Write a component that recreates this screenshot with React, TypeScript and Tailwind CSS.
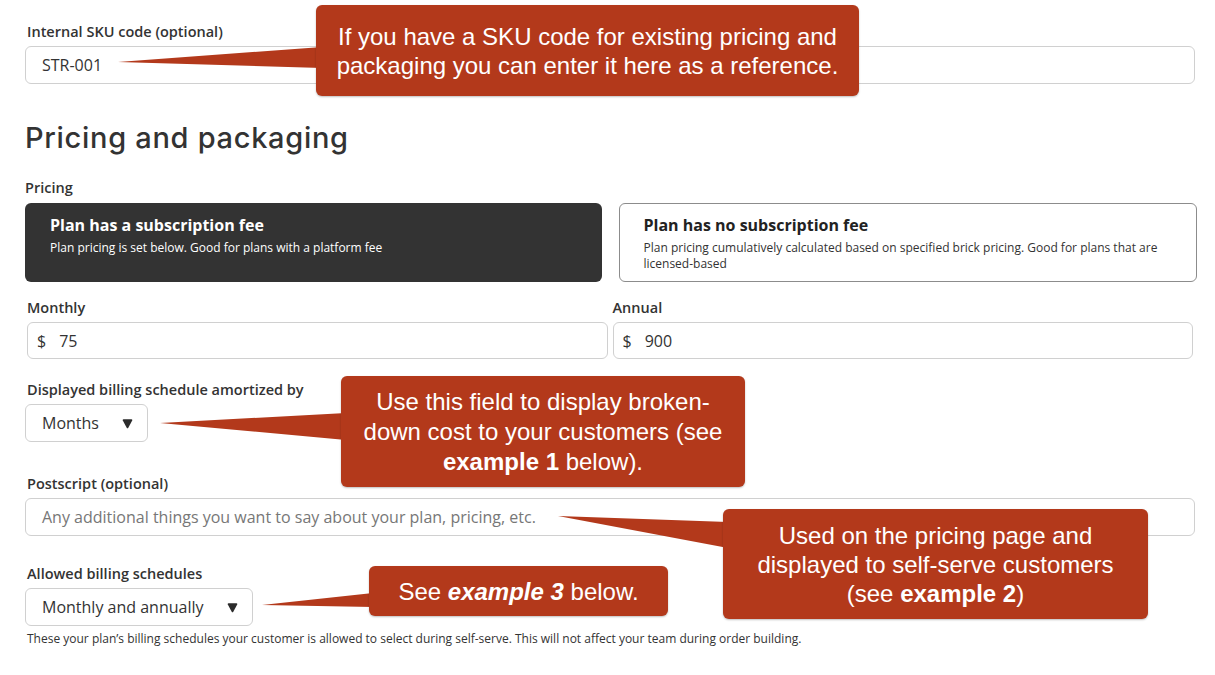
import React from 'react'

function Caret() {
  return (
    <svg width="11" height="11" viewBox="0 0 11 11" aria-hidden="true">
      <path d="M1.6 1.2 H9.4 Q10.6 1.2 10.2 2.4 L6.3 9.7 Q5.5 10.9 4.7 9.7 L0.8 2.4 Q0.4 1.2 1.6 1.2 Z" fill="#2b2b2b" />
    </svg>
  )
}

function Label({ children, className = '' }: { children: React.ReactNode; className?: string }) {
  return <p className={`text-[14.5px] font-semibold leading-[18px] text-[#333] ${className}`}>{children}</p>
}

function Callout({ className, children }: { className: string; children: React.ReactNode }) {
  return (
    <div
      className={`absolute flex items-center justify-center rounded-[6px] bg-[#b3391b] text-center font-['Liberation_Sans',Arial,sans-serif] text-[24px] text-white shadow-[0_1px_2px_rgba(0,0,0,0.25)] ${className}`}
    >
      <div>{children}</div>
    </div>
  )
}

export default function App() {
  return (
    <main className="relative h-[675px] w-[1215px] overflow-hidden bg-white font-['Open_Sans',sans-serif] text-[#333]">
      <div className="pl-[25px] pr-[20px] pt-[23px]">
        <Label className="pl-[2px]">Internal SKU code (optional)</Label>
        <div className="mt-[5px] flex h-[38px] items-center rounded-[6px] border-[1.5px] border-[#d0d0d0] px-[16px] text-[16px]">
          STR-001
        </div>

        <h2 className="mt-[36px] font-['Inter',sans-serif] text-[29px] font-medium leading-[36px] tracking-[0.7px] text-[#333]">
          Pricing and packaging
        </h2>

        <Label className="mt-[23px]">Pricing</Label>
        <div className="mt-[6px] grid grid-cols-2 gap-[17px]">
          <div className="h-[79px] rounded-[6px] bg-[#333] px-[25px] pt-[11px] text-white">
            <p className="text-[16px] font-bold leading-[22px]">Plan has a subscription fee</p>
            <p className="mt-[4px] text-[12px] leading-[16px]">Plan pricing is set below. Good for plans with a platform fee</p>
          </div>
          <div className="-mr-[2px] h-[79px] rounded-[6px] border-[1.5px] border-[#8c8c8c] px-[24px] pt-[10px]">
            <p className="text-[16px] font-bold leading-[22px] text-[#222]">Plan has no subscription fee</p>
            <p className="mt-[4px] text-[12px] leading-[16px] text-[#333]">
              Plan pricing cumulatively calculated based on specified brick pricing. Good for plans that are licensed-based
            </p>
          </div>
        </div>

        <div className="mt-[17px] grid grid-cols-2 gap-[5px] px-[2px]">
          <div>
            <Label>Monthly</Label>
            <div className="mt-[5px] flex h-[37px] items-center gap-[13px] rounded-[6px] border-[1.5px] border-[#d0d0d0] px-[9px] text-[16px]">
              <span>$</span>
              <span>75</span>
            </div>
          </div>
          <div>
            <Label>Annual</Label>
            <div className="mt-[5px] flex h-[37px] items-center gap-[13px] rounded-[6px] border-[1.5px] border-[#d0d0d0] px-[9px] text-[16px]">
              <span>$</span>
              <span>900</span>
            </div>
          </div>
        </div>

        <Label className="mt-[22px] pl-[2px]">Displayed billing schedule amortized by</Label>
        <div className="mt-[5px] flex h-[38px] w-[123px] items-center justify-between rounded-[6px] border-[1.5px] border-[#d0d0d0] pl-[16px] pr-[14px] text-[16px]">
          <span>Months</span>
          <Caret />
        </div>

        <Label className="mt-[33px] pl-[2px]">Postscript (optional)</Label>
        <div className="mt-[5px] flex h-[38px] items-center rounded-[6px] border-[1.5px] border-[#d0d0d0] px-[16px] text-[16px] text-[#777]">
          Any additional things you want to say about your plan, pricing, etc.
        </div>

        <Label className="mt-[29px] pl-[2px]">Allowed billing schedules</Label>
        <div className="mt-[5px] flex h-[38px] w-[228px] items-center justify-between rounded-[6px] border-[1.5px] border-[#d0d0d0] pl-[16px] pr-[14px] text-[16px]">
          <span>Monthly and annually</span>
          <Caret />
        </div>
        <p className="mt-[5px] pl-[2px] text-[12px] leading-[16px] text-[#333]">
          These your plan’s billing schedules your customer is allowed to select during self-serve. This will not affect your team during order building.
        </p>
      </div>

      <svg className="pointer-events-none absolute inset-0" width="1215" height="675" aria-hidden="true">
        <polygon points="118,62 322,47 322,68" fill="#b3391b" />
        <polygon points="160,423 346,413 346,440" fill="#b3391b" />
        <polygon points="558,516 728,522 728,548" fill="#b3391b" />
        <polygon points="262,605 373,593 373,607" fill="#b3391b" />
      </svg>

      <Callout className="left-[316px] top-[5px] h-[91px] w-[543px] leading-[29px]">
        If you have a SKU code for existing pricing and
        <br />
        packaging you can enter it here as a reference.
      </Callout>
      <Callout className="left-[341px] top-[376px] h-[111px] w-[404px] leading-[30px]">
        Use this field to display broken-
        <br />
        down cost to your customers (see
        <br />
        <b>example 1</b> below).
      </Callout>
      <Callout className="left-[723px] top-[509px] h-[110px] w-[425px] leading-[29px]">
        Used on the pricing page and
        <br />
        displayed to self-serve customers
        <br />
        (see <b>example 2</b>)
      </Callout>
      <Callout className="left-[369px] top-[566px] h-[50px] w-[299px] leading-[29px]">
        See <b className="italic">example 3</b> below.
      </Callout>
    </main>
  )
}
